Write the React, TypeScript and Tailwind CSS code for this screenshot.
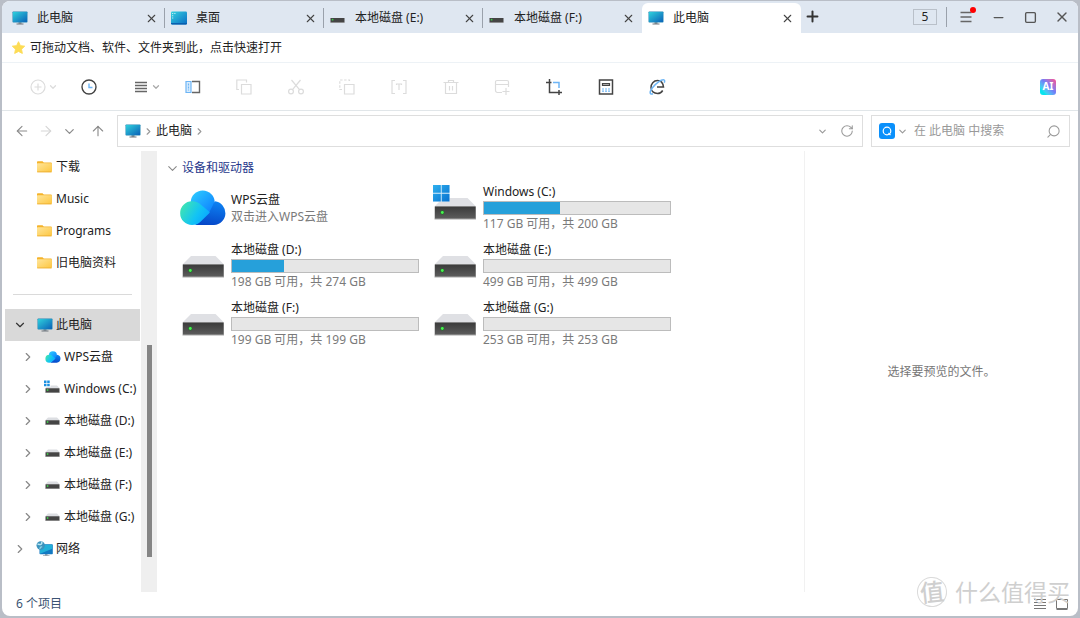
import type { ReactNode } from "react";
import clsx from "clsx";
import {
    ArrowLeft,
    ArrowRight,
    ArrowUp,
    ChevronDown,
    ChevronRight,
    Minus,
    Plus,
    RotateCw,
    Search,
    Square,
    X,
} from "lucide-react";

type IconName = "pc" | "desktop" | "drive" | "system" | "cloud" | "folder" | "network";

const tabs: { title: string; icon: IconName; active?: boolean }[] = [
    { title: "此电脑", icon: "pc" },
    { title: "桌面", icon: "desktop" },
    { title: "本地磁盘 (E:)", icon: "drive" },
    { title: "本地磁盘 (F:)", icon: "drive" },
    { title: "此电脑", icon: "pc", active: true },
];

const folders = ["下载", "Music", "Programs", "旧电脑资料"];

const tree: { label: string; icon: IconName; child?: boolean; open?: boolean }[] = [
    { label: "此电脑", icon: "pc", open: true },
    { label: "WPS云盘", icon: "cloud", child: true },
    { label: "Windows (C:)", icon: "system", child: true },
    { label: "本地磁盘 (D:)", icon: "drive", child: true },
    { label: "本地磁盘 (E:)", icon: "drive", child: true },
    { label: "本地磁盘 (F:)", icon: "drive", child: true },
    { label: "本地磁盘 (G:)", icon: "drive", child: true },
    { label: "网络", icon: "network" },
];

const drives: { name: string; info: string; used?: number; icon: IconName }[] = [
    { name: "WPS云盘", info: "双击进入WPS云盘", icon: "cloud" },
    { name: "Windows (C:)", info: "117 GB 可用，共 200 GB", used: 41, icon: "system" },
    { name: "本地磁盘 (D:)", info: "198 GB 可用，共 274 GB", used: 28, icon: "drive" },
    { name: "本地磁盘 (E:)", info: "499 GB 可用，共 499 GB", used: 0, icon: "drive" },
    { name: "本地磁盘 (F:)", info: "199 GB 可用，共 199 GB", used: 0, icon: "drive" },
    { name: "本地磁盘 (G:)", info: "253 GB 可用，共 253 GB", used: 0, icon: "drive" },
];

const PcIcon = () => (
    <svg viewBox="0 0 16 16" className="size-4 shrink-0">
        <defs>
            <linearGradient id="screen" x1="0" y1="0" x2="1" y2="1">
                <stop offset="0" stopColor="#2fd0dc" />
                <stop offset="1" stopColor="#0b62b8" />
            </linearGradient>
        </defs>
        <path d="M6.5 12h3v2h-3z" fill="#8b949c" />
        <path d="M4.5 13.5h7v1h-7z" fill="#6d757d" />
        <rect x="0.5" y="1.5" width="15" height="11" rx="0.8" fill="#2487b5" />
        <rect x="1" y="2" width="14" height="10" rx="0.4" fill="url(#screen)" />
    </svg>
);

const DesktopIcon = () => (
    <svg viewBox="0 0 16 16" className="size-4 shrink-0">
        <defs>
            <linearGradient id="desk" x1="0" y1="0" x2="1" y2="1">
                <stop offset="0" stopColor="#35d2e0" />
                <stop offset="1" stopColor="#0a6cc4" />
            </linearGradient>
        </defs>
        <rect y="1.5" width="16" height="13" rx="1.2" fill="url(#desk)" />
        <path d="M1.2 3h1v1h-1zM3.4 3h1v1h-1zM1.2 5.2h1v1h-1zM1.2 7.4h1v1h-1z" fill="#dff8fb" />
        <path d="M0 13h16v.3a1.2 1.2 0 0 1-1.2 1.2H1.2A1.2 1.2 0 0 1 0 13.3z" fill="#0a5fae" />
    </svg>
);

const SmallDriveIcon = ({ system, flat }: { system?: boolean; flat?: boolean }) => (
    <svg viewBox="0 0 16 16" className="size-4 shrink-0 overflow-visible">
        {!flat && <path d="M3 4.5h9l3 3H0z" fill="#dcdee2" />}
        <rect x="0.5" y={flat ? 8 : 7.2} width="14" height="4.5" rx="0.4" fill="#454545" />
        <path d={flat ? "M.5 12h14v.7H.5z" : "M.5 11.200h14v.7H.5z"} fill="#8a8a8a" />
        <circle cx="2.6" cy={flat ? 9.7 : 9} r="0.9" fill="#3fcb4a" />
        {system && (
            <>
                <path d="M-1.5-1h7v7h-7z" fill="#fff" />
                <path d="M-1-.5h2.500V2H-1zM2.200-.5h2.500V2H2.200zM-1 2.700h2.500v2.500H-1zM2.200 2.700h2.500v2.500H2.200z" fill="#1a8fe0" />
            </>
        )}
    </svg>
);

const BigDriveIcon = ({ system }: { system?: boolean }) => (
    <svg viewBox="0 0 48 48" className="size-12 shrink-0 overflow-visible">
        <defs>
            <linearGradient id="box" x1="0" y1="0" x2="0" y2="1">
                <stop offset="0" stopColor="#3a3a3a" />
                <stop offset="1" stopColor="#5c5c5c" />
            </linearGradient>
            <linearGradient id="win" x1="0" y1="0" x2="1" y2="1">
                <stop offset="0" stopColor="#2fb0ee" />
                <stop offset="1" stopColor="#0872d0" />
            </linearGradient>
        </defs>
        <path d="M12 14h24.500L45 22.500H3.500z" fill="#dfe0e4" />
        <path d="M3.500 22.500H45V35.500H3.500z" fill="#a5a5a5" />
        <path d="M4 22.500h40.500v12H4z" fill="url(#box)" />
        <circle cx="11.300" cy="28.500" r="2" fill="#1c7a25" />
        <circle cx="11.300" cy="28.500" r="1.400" fill="#4bf052" />
        {system && (
            <>
                <path d="M2 1h16.500v16.500H2z" fill="#d9eefb" />
                <path d="M2 1h7.800v7.800H2zM10.700 1h7.800v7.800h-7.800zM2 9.700h7.800v7.800H2zM10.700 9.700h7.800v7.800h-7.800z" fill="url(#win)" />
            </>
        )}
    </svg>
);

const CloudIcon = ({ className }: { className: string }) => (
    <svg viewBox="0 0 48 48" className={clsx("shrink-0", className)}>
        <defs>
            <linearGradient id="cloudTop" x1="0" y1="0" x2="1" y2="1">
                <stop offset="0" stopColor="#2fd0ff" />
                <stop offset="1" stopColor="#0a78ff" />
            </linearGradient>
            <linearGradient id="cloudRight" x1="0.6" y1="0" x2="0.4" y2="1">
                <stop offset="0" stopColor="#0d82f2" />
                <stop offset="1" stopColor="#0647c8" />
            </linearGradient>
            <linearGradient id="cloudLeft" x1="0" y1="0.2" x2="1" y2="0.7">
                <stop offset="0" stopColor="#41e6ae" />
                <stop offset="0.6" stopColor="#12c3f5" />
                <stop offset="1" stopColor="#08a6ff" />
            </linearGradient>
        </defs>
        <circle cx="23.7" cy="18.500" r="12" fill="url(#cloudTop)" />
        <path d="M16 41 30.300 28.200l3.300-6.400A12 12 0 0 1 36 17.300 11.900 11.900 0 0 1 35 41z" fill="url(#cloudRight)" />
        <path d="M13 17.300c3.800 0 6.800 1.300 9.200 3.600l7.600 6.300c.9.800.9 1.600.1 2.400L21.800 37.500C19.500 39.900 17 41 13 41a11.850 11.850 0 0 1 0-23.700z" fill="url(#cloudLeft)" />
    </svg>
);

const FolderIcon = () => (
    <svg viewBox="0 0 16 16" className="size-4 shrink-0">
        <defs>
            <linearGradient id="folder" x1="0" y1="0" x2="1" y2="1">
                <stop offset="0" stopColor="#ffe59a" />
                <stop offset="1" stopColor="#fdc63f" />
            </linearGradient>
        </defs>
        <path d="M0 3a.8.8 0 0 1 .8-.8h4.700L6.800 3.500H14a.8.8 0 0 1 .8.8V12H0z" fill="#f5b32a" />
        <rect y="4.300" width="14.800" height="9" rx="0.6" fill="url(#folder)" />
        <path d="M.3 12.600h14.200v.7H.3z" fill="#e9a92c" />
    </svg>
);

const NetworkIcon = () => (
    <svg viewBox="0 0 16 16" className="size-4 shrink-0 overflow-visible">
        <path d="M8 13h2.500v1.500H8zM6 14.200h6.500v.9H6z" fill="#9aa4ad" />
        <rect x="2.5" y="3.300" width="13.300" height="10" rx="0.8" fill="#1279c2" />
        <path d="M3 3.800h12.300v4L3 12.800z" fill="#22b0d8" />
        <circle cx="3.700" cy="4.500" r="4.200" fill="#3b93bd" />
        <path d="M.5 3.500c1.300-.6 2.200.4 3.400-.2S5 1.500 4.500.6" fill="none" stroke="#b9e6f2" strokeWidth="1.500" />
        <path d="M3 8c-.2-1.500.8-2.300 2.200-2" fill="none" stroke="#8fd4e8" strokeWidth="1.200" />
    </svg>
);

const SmallIcon = ({ name, flat }: { name: IconName; flat?: boolean }) => {
    if (name === "pc") return <PcIcon />;
    if (name === "desktop") return <DesktopIcon />;
    if (name === "cloud") return <CloudIcon className="size-4" />;
    if (name === "folder") return <FolderIcon />;
    if (name === "network") return <NetworkIcon />;
    return <SmallDriveIcon system={name === "system"} flat={flat} />;
};

const BigIcon = ({ name }: { name: IconName }) =>
    name === "cloud" ? <CloudIcon className="size-12" /> : <BigDriveIcon system={name === "system"} />;

const BLUE = "#6db5f5";

// 16x16 line drawings for the toolbar
const tools: { label: string; disabled?: boolean; menu?: boolean; art: ReactNode }[] = [
    {
        label: "新建",
        disabled: true,
        menu: true,
        art: (
            <>
                <circle cx="8" cy="8" r="7" />
                <path d="M8 4.500v7M4.500 8h7" />
            </>
        ),
    },
    {
        label: "历史",
        art: (
            <>
                <circle cx="8" cy="8" r="7" strokeWidth="1.400" />
                <path d="M8 4.500V8.500h3.500" stroke={BLUE} strokeWidth="1.400" />
            </>
        ),
    },
    {
        label: "排序",
        menu: true,
        art: <path d="M2 3.500h12M2 6.500h12M2 9.500h12M2 12.500h12" stroke="#666" strokeWidth="1.400" />,
    },
    {
        label: "窗格",
        art: (
            <>
                <path d="M7 2.500h7.500v11H7" stroke="#666" strokeWidth="1.400" />
                <path d="M1 2.500h5v11H1z" stroke={BLUE} fill="#d9ecfd" />
                <path d="M3.500 4.500v7" stroke={BLUE} strokeDasharray="2 1" />
            </>
        ),
    },
    {
        label: "复制",
        disabled: true,
        art: (
            <>
                <path d="M5.500 5.500h9.500v9.500H5.500z" />
                <path d="M3 10.500H.8V1H10.500v2.500" />
            </>
        ),
    },
    {
        label: "剪切",
        disabled: true,
        art: (
            <>
                <circle cx="3" cy="12.500" r="2.400" />
                <circle cx="13" cy="12.500" r="2.400" />
                <path d="M3.500 1 11.500 10.700M12.500 1 4.500 10.700" />
            </>
        ),
    },
    {
        label: "粘贴",
        disabled: true,
        art: (
            <>
                <path d="M5.500 5.500h9.500v9.500H5.500z" />
                <path d="M3 10.500H.8V1H10.500v2.500" strokeDasharray="2.500 1.500" />
            </>
        ),
    },
    {
        label: "重命名",
        disabled: true,
        art: <path d="M4 1.500H1v13h3M12 1.500h3v13h-3M5.500 6V5h5v1M8 5v6" />,
    },
    {
        label: "删除",
        disabled: true,
        art: <path d="M.5 3.500h15M5.500 3.500V1.500h5v2M2.500 3.500v11h11v-11M6.500 7v4.500M9.500 7v4.500" />,
    },
    {
        label: "添加",
        disabled: true,
        art: <path d="M8 13.500H3.500a2 2 0 0 1-2-2V3a1.500 1.500 0 0 1 1.500-1.500h10A1.500 1.500 0 0 1 14.500 3v5M1.500 5.500h13M12 9v7M8.500 12.500h7" />,
    },
    {
        label: "截图",
        art: (
            <>
                <path d="M3.500 0v13.500H16M0 3.500h5.500M13 11v5" strokeWidth="1.500" />
                <path d="M7 3.500h6V9" stroke={BLUE} strokeWidth="1.500" />
            </>
        ),
    },
    {
        label: "计算器",
        art: (
            <>
                <path d="M1.500 1h13v14h-13z" strokeWidth="1.500" />
                <path d="M4.500 4.500h7v2h-7z" fill="#aaa" />
                <path d="M4 10h2M7 10h2M10 10h2M4 12.200h2M7 12.200h2M10 12.200h2" stroke={BLUE} />
            </>
        ),
    },
    {
        label: "浏览器",
        art: (
            <>
                <path d="M8 8h6.500C14 4 11.500 1.500 8.500 1.500 4.500 1.500 2 5 2 8.500c0 3.700 3 6 6.500 6 2.300 0 4-1 5.200-3" strokeWidth="1.500" />
                <path d="M4 14.800c-3.500 1.200-3.800-1.500-.8-5.800S12.500.2 15 .9c1 .3.7 1.600.2 2.800" stroke={BLUE} strokeWidth="1.500" />
            </>
        ),
    },
];

const TitleBar = () => (
    <header className="flex h-8 shrink-0 items-end bg-[#dfe7f1]">
        <div role="tablist" className="ml-1 flex min-w-0 items-end">
            {tabs.map((tab, i) => (
                <div
                    key={i}
                    className={clsx(
                        "flex h-[30px] w-[159px] min-w-0 items-center gap-1.5 pl-1.5",
                        tab.active && "rounded-t-md bg-white"
                    )}
                >
                    <button
                        role="tab"
                        aria-selected={!!tab.active}
                        className="flex min-w-0 flex-1 items-center gap-[9px] whitespace-nowrap"
                    >
                        <SmallIcon name={tab.icon} flat />
                        <span>{tab.title}</span>
                    </button>
                    <button aria-label="关闭标签页" className="text-[#444]">
                        <X size={13} strokeWidth={2} />
                    </button>
                    <span className={clsx("h-5 w-px", i < 3 && "bg-[#9aa1ab]")} />
                </div>
            ))}
        </div>
        <button aria-label="新标签页" className="mb-2 ml-[3px] text-[#333]">
            <Plus size={17} strokeWidth={2.8} />
        </button>
        <div className="ml-auto flex h-8 items-center">
            <span className="flex h-4 w-6 items-center justify-center border border-[#b9c0c9]">5</span>
            <span className="mr-[3px] ml-[9px] h-5 w-px bg-[#9aa1ab]" />
            <button aria-label="菜单" className="relative flex w-8 justify-center text-[#666]">
                <svg viewBox="0 0 12 12" className="size-3" stroke="currentColor" strokeWidth="1.3">
                    <path d="M.5 1.500h11M.5 6h11M.5 10.500h11" />
                </svg>
                <span className="absolute -top-1 right-1.5 size-1.5 rounded-full bg-[#f00]" />
            </button>
            <button aria-label="最小化" className="flex w-8 justify-center text-[#555]">
                <Minus size={15} strokeWidth={2} />
            </button>
            <button aria-label="最大化" className="flex w-8 justify-center text-[#555]">
                <Square size={13} strokeWidth={2.5} />
            </button>
            <button aria-label="关闭" className="flex w-8 justify-center text-[#555]">
                <X size={16} strokeWidth={2} />
            </button>
        </div>
    </header>
);

const Toolbar = () => (
    <div className="flex h-12 shrink-0 items-center border-b border-[#e1e6e9] pl-2.5">
        <div className="grid w-[671px] grid-cols-13">
            {tools.map((tool) => (
                <button
                    key={tool.label}
                    aria-label={tool.label}
                    disabled={tool.disabled}
                    className={clsx(
                        "grid grid-cols-[1fr_16px_1fr] items-center",
                        tool.disabled ? "text-[#dcdcdc]" : "text-[#444]"
                    )}
                >
                    <svg viewBox="0 0 16 16" className="col-start-2 size-4 overflow-visible" fill="none" stroke="currentColor" strokeWidth="1.2">
                        {tool.art}
                    </svg>
                    {tool.menu && (
                        <ChevronDown size={10} strokeWidth={3} className={clsx("ml-0.5", !tool.disabled && "text-[#aaa]")} />
                    )}
                </button>
            ))}
        </div>
        <button
            aria-label="AI 助手"
            className="mr-[22px] ml-auto flex size-4 items-center justify-center rounded-[3px] bg-linear-to-tr from-[#08e4ee] from-20% via-[#6f7cf8] via-55% to-[#fb3d8c] text-[10px] font-bold text-white"
        >
            AI
        </button>
    </div>
);

const AddressRow = () => (
    <div className="flex h-10 shrink-0 items-center gap-2 pr-2 pl-3">
        <div className="flex w-[95px] items-center text-[#8c8c8c]">
            <button aria-label="后退" className="w-6">
                <ArrowLeft size={16} strokeWidth={1.7} />
            </button>
            <button aria-label="前进" disabled className="w-6 text-[#d5d5d5]">
                <ArrowRight size={16} strokeWidth={1.7} />
            </button>
            <button aria-label="最近位置" className="w-7">
                <ChevronDown size={15} strokeWidth={2} />
            </button>
            <button aria-label="上一级" className="w-4">
                <ArrowUp size={16} strokeWidth={1.7} />
            </button>
        </div>
        <div className="flex h-8 min-w-0 flex-1 items-center border border-[#dedede] pr-2 pl-[7px]">
            <PcIcon />
            <ChevronRight size={11} strokeWidth={2.5} className="mx-0.5 text-[#999]" />
            <button>此电脑</button>
            <ChevronRight size={11} strokeWidth={2.5} className="mx-0.5 text-[#999]" />
            <button aria-label="历史地址" className="mr-3 ml-auto text-[#999]">
                <ChevronDown size={11} strokeWidth={2.5} />
            </button>
            <button aria-label="刷新" className="text-[#999]">
                <RotateCw size={14} strokeWidth={1.8} />
            </button>
        </div>
        <label className="flex h-8 w-[199px] items-center border border-[#dedede] pr-2 pl-[7px]">
            <span className="flex size-4 shrink-0 items-center justify-center rounded-[3px] bg-[#0a90fb]">
                <svg viewBox="0 0 16 16" className="size-4" fill="none" stroke="#fff" strokeWidth="1.2">
                    <circle cx="8" cy="8" r="3.8" />
                    <path d="m9.500 10 2 2.200" />
                </svg>
            </span>
            <ChevronDown size={11} strokeWidth={2.5} className="mx-0.5 shrink-0 text-[#999]" />
            <input
                type="search"
                aria-label="搜索"
                placeholder="在 此电脑 中搜索"
                className="ml-1 min-w-0 flex-1 outline-none placeholder:text-[#999]"
            />
            <Search size={15} strokeWidth={1.7} className="shrink-0 -scale-x-100 text-[#999]" />
        </label>
    </div>
);

const Sidebar = () => (
    <aside className="flex w-[155px] shrink-0">
        <nav className="flex-1 overflow-hidden pr-px pl-[3px]">
            {folders.map((name) => (
                <a key={name} href="#" className="flex h-8 items-center gap-[3px] pl-8 whitespace-nowrap">
                    <FolderIcon />
                    <span>{name}</span>
                </a>
            ))}
            <div className="flex h-[30px] items-center px-2">
                <hr className="flex-1 border-[#dadada]" />
            </div>
            {tree.map((item) => {
                const Chevron = item.open ? ChevronDown : ChevronRight;
                return (
                    <a
                        key={item.label}
                        href="#"
                        className={clsx(
                            "flex h-8 items-center gap-[3px] whitespace-nowrap",
                            item.child ? "pl-4" : "pl-2",
                            item.open && "bg-[#d9d9d9]"
                        )}
                    >
                        <Chevron
                            size={14}
                            strokeWidth={2}
                            className={clsx("mr-[7px] shrink-0", item.open ? "text-[#333]" : "text-[#888]")}
                        />
                        <SmallIcon name={item.icon} />
                        <span>{item.label}</span>
                    </a>
                );
            })}
        </nav>
        <div className="flex w-4 flex-col items-center bg-[#efefef]">
            <div className="basis-[44%]" />
            <div className="w-[5px] basis-[48%] bg-[#858585]" />
        </div>
    </aside>
);

const DriveList = () => (
    <main className="min-w-0 flex-1 pt-2 pl-2">
        <h2>
            <button className="flex h-[18px] items-center gap-0.5 text-[#26378b]">
                <ChevronDown size={15} strokeWidth={1.7} className="text-[#888]" />
                设备和驱动器
            </button>
        </h2>
        <ul className="mt-0.5 ml-3.5 grid grid-cols-[repeat(auto-fill,252px)]">
            {drives.map((drive) => (
                <li key={drive.name} className="flex h-[58px] items-center gap-1">
                    <BigIcon name={drive.icon} />
                    <div className="w-[188px] leading-4">
                        <p>{drive.name}</p>
                        {drive.used !== undefined && (
                            <div
                                role="progressbar"
                                aria-label={drive.name}
                                aria-valuenow={drive.used}
                                className="mt-px h-3.5 border border-[#bcbcbc] bg-[#e6e6e6]"
                            >
                                <div className="h-full bg-[#26a0da]" style={{ width: `${drive.used}%` }} />
                            </div>
                        )}
                        <p className="mt-px text-[#7a7a7a]">{drive.info}</p>
                    </div>
                </li>
            ))}
        </ul>
    </main>
);

const Watermark = () => (
    <div className="pointer-events-none absolute right-2 bottom-2 flex items-center gap-2 text-[#cfcfcf]">
        <span className="flex size-[30px] -rotate-6 items-center justify-center rounded-full border border-[#dadada] text-2xl leading-none font-medium">
            值
        </span>
        <span className="text-[23px] leading-8">什么值得买</span>
    </div>
);

const App = () => {
    return (
        <div className="h-screen bg-[#b9bec7] px-0.5 pt-px pb-0.5 font-['Noto_Sans','Noto_Sans_CJK_SC',sans-serif] text-xs text-[#222]">
            <div className="relative flex h-full flex-col overflow-hidden rounded-lg bg-white">
                <TitleBar />
                <div className="flex h-[30px] shrink-0 items-center gap-1 border-b border-[#edf2f6] pl-[9px]">
                    <svg viewBox="0 0 16 16" className="size-[15px]" fill="#fddc55" stroke="#fddc55" strokeLinejoin="round">
                        <path d="m8 1.800 2 4.200 4.600.6-3.400 3.200.9 4.500L8 12.200l-4.100 2.100.9-4.500L1.400 6.600 6 6z" />
                    </svg>
                    <span>可拖动文档、软件、文件夹到此，点击快速打开</span>
                </div>
                <Toolbar />
                <AddressRow />
                <div className="flex min-h-0 flex-1">
                    <Sidebar />
                    <DriveList />
                    <section className="flex w-[274px] shrink-0 items-center justify-center border-l border-[#f1f1f1] text-[#777]">
                        选择要预览的文件。
                    </section>
                </div>
                <footer className="flex h-6 shrink-0 items-center justify-between pr-2.5 pl-3.5 text-[#3b5373]">
                    <span>6 个项目</span>
                    <div className="flex gap-2.5 text-[#777]">
                        <button aria-label="详细信息">
                            <svg viewBox="0 0 12 12" className="size-3" stroke="currentColor">
                                <path d="M0 1.500h12M0 4.500h12M0 7.500h12M0 10.500h12" />
                            </svg>
                        </button>
                        <button aria-label="大图标">
                            <svg viewBox="0 0 12 12" className="size-3" fill="none" stroke="currentColor">
                                <path d="M.5 1.500h11v9H.5zM.5 11.500h11" />
                            </svg>
                        </button>
                    </div>
                </footer>
                <Watermark />
            </div>
        </div>
    );
};

export default App;
